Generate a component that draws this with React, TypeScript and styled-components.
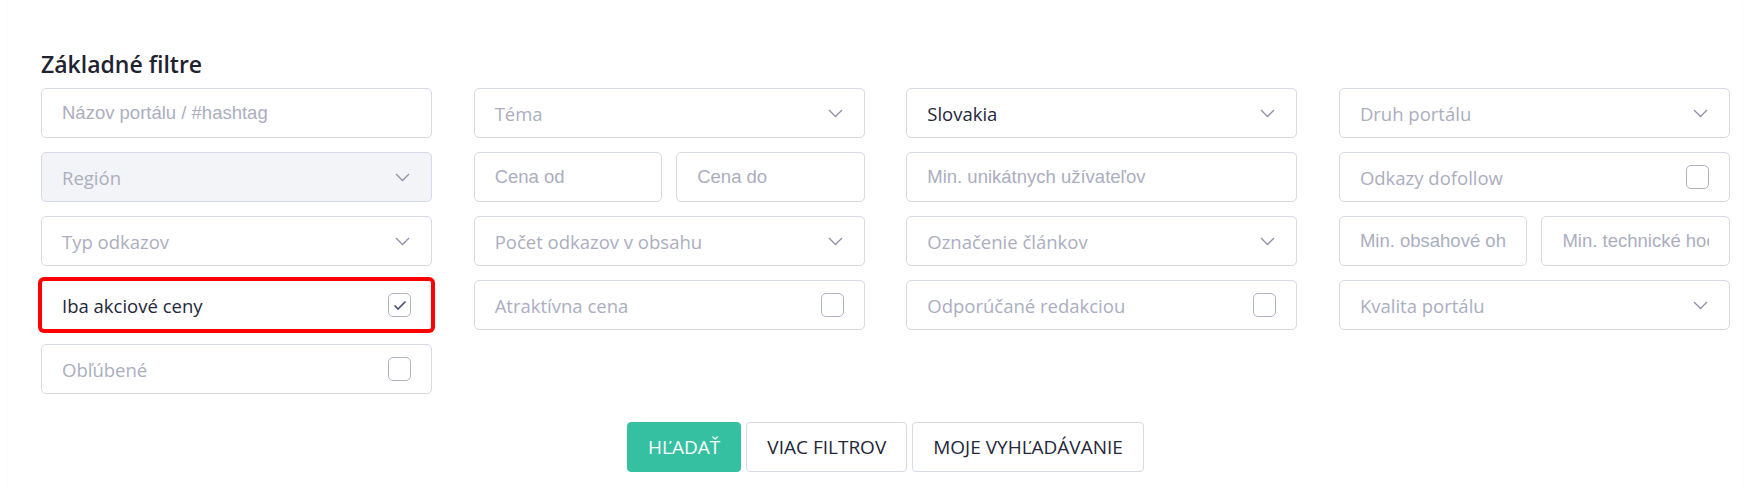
import React, { useState } from "react"
import styled, { createGlobalStyle, css } from 'styled-components';

// Styled Components ======================================================

const GlobalStyle = createGlobalStyle`
    html, body {
        margin: 0;
        padding: 0;
        background: #ffffff;
        font-family: "Open Sans", "Noto Sans", sans-serif;
    }
    * { box-sizing: border-box; }
`;

const Card = styled.section`
    margin: 0 8px;
    padding: 48px 12px 0 33px;
    height: 490px;
    background: #fff;
    border-radius: 4px;
    box-shadow: 0 1px 3px rgba(30, 34, 60, 0.035);
`;

const Heading = styled.h2`
    margin: 0 0 8px 0;
    font-size: 23px;
    line-height: 32px;
    font-weight: 600;
    color: #1f2230;
`;

const Grid = styled.div`
    display: grid;
    grid-template-columns: repeat(4, 1fr);
    column-gap: 41.5px;
    row-gap: 14px;
`;

const Split = styled.div`
    display: grid;
    grid-template-columns: 1fr 1fr;
    column-gap: 14px;
`;

const boxBase = css`
    height: 50px;
    border: 1px solid #d6d9e6;
    border-radius: 5px;
    background: #fff;
`;

const Input = styled.input`
    ${boxBase};
    width: 100%;
    padding: 0 20px;
    font-family: "Liberation Sans", Arial, sans-serif;
    font-size: 18.5px;
    color: #1e2235;
    outline: none;

    &::placeholder {
        color: #abaec0;
    }
`;

const Box = styled.div<{ $disabled?: boolean; $marked?: boolean }>`
    ${boxBase};
    display: flex;
    align-items: center;
    justify-content: space-between;
    padding: 0 20px 0 20px;
    cursor: pointer;
    background: ${p => p.$disabled ? '#f3f4f8' : '#fff'};
    ${p => p.$marked && css`
        border-color: #ff0000;
        box-shadow: 0 0 0 3px #ff0000;
        border-radius: 3px;
    `}
`;

const Label = styled.span<{ $filled?: boolean }>`
    font-size: 18.5px;
    color: ${p => p.$filled ? '#23273a' : '#abaec0'};
    white-space: nowrap;
`;

const Check = styled.span`
    width: 23px;
    height: 24px;
    border: 1px solid #aeb2c5;
    border-radius: 5px;
    display: flex;
    align-items: center;
    justify-content: center;
    background: #fff;
`;

const Chevron = styled.svg`
    width: 15px;
    height: 9px;
    margin-right: 1px;
`;

const Actions = styled.div`
    display: flex;
    justify-content: center;
    gap: 5px;
    margin-top: 28px;
`;

const Button = styled.button<{ $primary?: boolean }>`
    height: 50px;
    padding: 0 20px;
    border-radius: 4px;
    font-family: "Open Sans", "Noto Sans", sans-serif;
    font-size: 19px;
    text-transform: uppercase;
    cursor: pointer;
    border: 1px solid ${p => p.$primary ? '#36c0a2' : '#d6d9e6'};
    background: ${p => p.$primary ? '#36c0a2' : '#fff'};
    color: ${p => p.$primary ? '#fff' : '#23273a'};
`;

// =========================================================================

function SelectBox({ label, value, disabled }: { label: string; value?: string; disabled?: boolean }) {
    return (
        <Box $disabled={disabled}>
            <Label $filled={Boolean(value)}>{value || label}</Label>
            <Chevron viewBox="0 0 15 9">
                <polyline points="1,1 7.5,7.5 14,1" fill="none" stroke="#8c91aa" strokeWidth="1.3" />
            </Chevron>
        </Box>
    );
}

function CheckBox({ label, marked, initial = false }: { label: string; marked?: boolean; initial?: boolean }) {
    const [checked, setChecked] = useState(initial);
    return (
        <Box $marked={marked} onClick={() => setChecked(!checked)}>
            <Label $filled={checked}>{label}</Label>
            <Check>
                {checked &&
                    <svg width="14" height="11" viewBox="0 0 14 11">
                        <polyline points="1.5,5.5 5,9 12.5,1.5" fill="none" stroke="#4b5675" strokeWidth="1.7" />
                    </svg>}
            </Check>
        </Box>
    );
}

export default function App() {
    return (
        <Card>
            <GlobalStyle />
            <Heading>Základné filtre</Heading>
            <Grid>
                <Input placeholder="Názov portálu / #hashtag" />
                <SelectBox label="Téma" />
                <SelectBox label="Krajina" value="Slovakia" />
                <SelectBox label="Druh portálu" />

                <SelectBox label="Región" disabled />
                <Split>
                    <Input placeholder="Cena od" />
                    <Input placeholder="Cena do" />
                </Split>
                <Input placeholder="Min. unikátnych užívateľov" />
                <CheckBox label="Odkazy dofollow" />

                <SelectBox label="Typ odkazov" />
                <SelectBox label="Počet odkazov v obsahu" />
                <SelectBox label="Označenie článkov" />
                <Split>
                    <Input placeholder="Min. obsahové ohodnotenie" />
                    <Input placeholder="Min. technické hodnotenie" />
                </Split>

                <CheckBox label="Iba akciové ceny" marked initial />
                <CheckBox label="Atraktívna cena" />
                <CheckBox label="Odporúčané redakciou" />
                <SelectBox label="Kvalita portálu" />

                <CheckBox label="Obľúbené" />
            </Grid>
            <Actions>
                <Button $primary>Hľadať</Button>
                <Button>Viac filtrov</Button>
                <Button>Moje vyhľadávanie</Button>
            </Actions>
        </Card>
    );
}
